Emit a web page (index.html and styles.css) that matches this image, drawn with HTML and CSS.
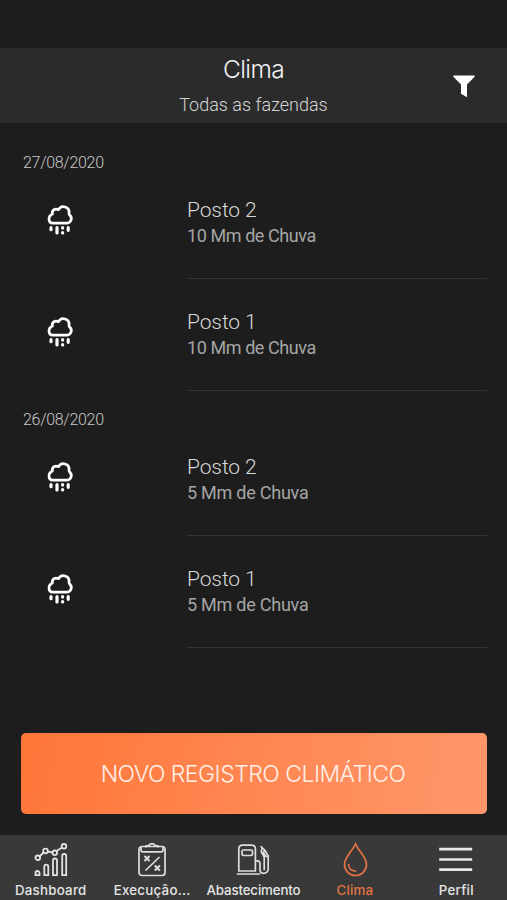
FILE: index.html
```html
<!DOCTYPE html>
<html lang="pt-BR">
<head>
<meta charset="utf-8">
<title>Clima</title>
<link rel="stylesheet" href="styles.css">
</head>
<body>
<svg class="defs" width="0" height="0" aria-hidden="true">
  <symbol id="rain" viewBox="0 0 28 34">
    <path d="M6.500 21.200h14a4.600 4.600 0 0 0 3.600-7.700c-.9-.9-1.300-1.200-1.100-2.400.9-6.600-7.800-8.600-10.400-3.400-3.800-1.900-7 .9-6.200 4.300-5.100 2.400-3.900 9.200.1 9.200z" fill="none" stroke="#fff" stroke-width="2.700" stroke-linejoin="round"/>
    <path d="M5 25.700v2M11 25.700v5.200M22.200 25.700v2.600" fill="none" stroke="#fff" stroke-width="3.200" stroke-linecap="round"/>
    <path d="M16.600 25.700v.4M16.600 30.500v.4" fill="none" stroke="#fff" stroke-width="3.200" stroke-linecap="round"/>
  </symbol>
</svg>
<div class="app">
  <header class="header">
    <div class="titles">
      <h1 class="title">Clima</h1>
      <p class="subtitle">Todas as fazendas</p>
    </div>
    <svg class="filter" width="22" height="23" viewBox="0 0 22 23"><path d="M.3.500H21.700V1.800L14 9.500V22.200L8 18.800V9.500L.3 1.800z" fill="#fff"/></svg>
  </header>
  <main class="list">
    <h2 class="date">27/08/2020</h2>
    <div class="row"><svg class="rain" width="28" height="34"><use href="#rain"/></svg><div class="info"><span class="place">Posto 2</span><span class="amount">10 Mm de Chuva</span></div></div>
    <div class="row"><svg class="rain" width="28" height="34"><use href="#rain"/></svg><div class="info"><span class="place">Posto 1</span><span class="amount">10 Mm de Chuva</span></div></div>
    <h2 class="date">26/08/2020</h2>
    <div class="row"><svg class="rain" width="28" height="34"><use href="#rain"/></svg><div class="info"><span class="place">Posto 2</span><span class="amount amount-short">5 Mm de Chuva</span></div></div>
    <div class="row"><svg class="rain" width="28" height="34"><use href="#rain"/></svg><div class="info"><span class="place">Posto 1</span><span class="amount amount-short">5 Mm de Chuva</span></div></div>
  </main>
  <button class="cta">NOVO REGISTRO CLIMÁTICO</button>
  <nav class="tabs">
    <a class="tab tab-wide"><svg width="36" height="36" viewBox="0 0 36 36" fill="none" stroke="#e2e2e2" stroke-width="1.800">
      <path d="M6.500 14.500l4-4M14.500 9.500l4.800.8M23.500 9l5.500-3.500"/>
      <circle cx="4.800" cy="15.800" r="2.300"/><circle cx="12.500" cy="9" r="2.300"/><circle cx="21.800" cy="10.800" r="2.300"/><circle cx="31" cy="4.300" r="2.300"/>
      <path d="M2.500 33.200v-2.200a2 2 0 0 1 4 0v2.200zM11.300 33.200v-8.500a2 2 0 0 1 4 0v8.500zM20 33.200V18.500a2 2 0 0 1 4 0v14.700zM29.200 33.200V14a2 2 0 0 1 4 0v19.200z"/></svg><span>Dashboard</span></a>
    <a class="tab tab-wide"><svg width="36" height="36" viewBox="0 0 36 36" fill="none" stroke="#dedede" stroke-width="1.700">
      <rect x="5" y="4.500" width="26" height="29" rx="3"/>
      <path d="M7 5v3q0 1.800 2 1.800h18q2 0 2-1.800V5M12 5.500V3.800h3q0-2 3-2t3 2h3v1.700M11.500 28.500l14-13.500"/>
      <path d="M10.500 14l5 5M15.500 14l-5 5M20.800 23.500l5 5M25.800 23.500l-5 5" stroke-width="2"/></svg><span>Execução...</span></a>
    <a class="tab tab-fuel"><svg width="36" height="36" viewBox="0 0 36 36" fill="none" stroke="#dedede" stroke-width="1.700" stroke-linejoin="round" stroke-linecap="round">
      <path d="M3.800 29V7q0-3.800 3.800-3.800h9q3.800 0 3.800 3.800v22zM2.500 32h22"/>
      <rect x="7" y="8" width="10.500" height="5.500" rx="1.500"/>
      <path d="M20.500 18.800h2q2.500 0 2.500 3v6q0 3.500 3.600 3.500t4.600-3.500V14l-3.600-6-3.500-3.300M27.200 6l-1 3.700 3 5.300v12.500M29.600 8l-1.200 2.600 2.500 3.900h2.100"/></svg><span>Abastecimento</span></a>
    <a class="tab tab-active"><svg width="36" height="36" viewBox="0 0 36 36" fill="none" stroke="#e27345" stroke-width="1.700" stroke-linecap="round">
      <path d="M18.500 2C15.800 8.500 7.500 15 7.500 22.500a11 11 0 0 0 22 0C29.500 15 21.200 8.500 18.500 2zM11.500 22.500q.6 6 7 6.700"/></svg><span>Clima</span></a>
    <a class="tab tab-wide"><svg width="36" height="36" viewBox="0 0 36 36"><path d="M1.200 7.200h33M1.200 17.500h33M1.200 27.600h33" stroke="#e8e8e8" stroke-width="2.700" fill="none"/></svg><span>Perfil</span></a>
  </nav>
</div>
</body>
</html>
```
FILE: styles.css
```css
* { box-sizing: border-box; }
body { margin: 0; background: #1d1d1d; font-family: Roboto, "Liberation Sans", sans-serif; }
.defs { display: block; }
.app { height: 900px; padding-top: 48px; display: flex; flex-direction: column; overflow: hidden; }
h1, h2, p { margin: 0; font-weight: 400; }
.header { height: 75px; flex: none; background: #2b2b2b; display: grid; grid-template-columns: 60px 1fr 60px; }
.titles { grid-column: 2; text-align: center; padding-top: 6px; }
.title { font: 350 24.500px/30px Inter, sans-serif; letter-spacing: -.6px; color: #f2f2f2; }
.subtitle { font-size: 18px; line-height: 24px; margin-top: 9px; color: #d6d6d6; font-weight: 350; }
.filter { margin: 27px 0 0 6px; }
.list { flex: none; height: 610px; padding-top: 11px; }
.date { height: 33px; padding: 18px 0 0 23px; font-size: 16px; line-height: 22px; letter-spacing: -.3px; color: #c8c8c8; font-weight: 350; }
.row { height: 112px; display: grid; grid-template-columns: 187px 1fr; padding-right: 20px; }
.rain { margin: 35px 0 0 46px; }
.info { border-bottom: 1px solid #343434; display: flex; flex-direction: column; padding-top: 30px; }
.place { font-size: 21px; line-height: 26px; letter-spacing: -.1px; color: #dadada; font-weight: 350; }
.amount { font-size: 18px; line-height: 26px; letter-spacing: -.42px; color: #a5a5a5; font-weight: 400; }
.amount-short { letter-spacing: -.24px; }
.cta { flex: none; height: 81px; margin: 0 20px 21px 21px; padding: 0 2px 0 0; border: 0; border-radius: 5px; background: linear-gradient(100deg, #ff7638, #ff976b); color: #fff0e8; font: 350 23px/28px Inter, sans-serif; letter-spacing: -.52px; }
.tabs { flex: none; height: 65px; background: #393939; display: grid; grid-template-columns: repeat(5, 1fr); }
.tab { display: flex; flex-direction: column; align-items: center; padding-top: 7px; color: #e5e5e5; font: 500 13.300px/18px Inter, sans-serif; white-space: nowrap; }
.tab svg { flex: none; margin-bottom: 3px; }
.tab-wide { letter-spacing: .25px; }
.tab-fuel { letter-spacing: -.15px; }
.tab-active { color: #e27345; letter-spacing: .2px; }
```
